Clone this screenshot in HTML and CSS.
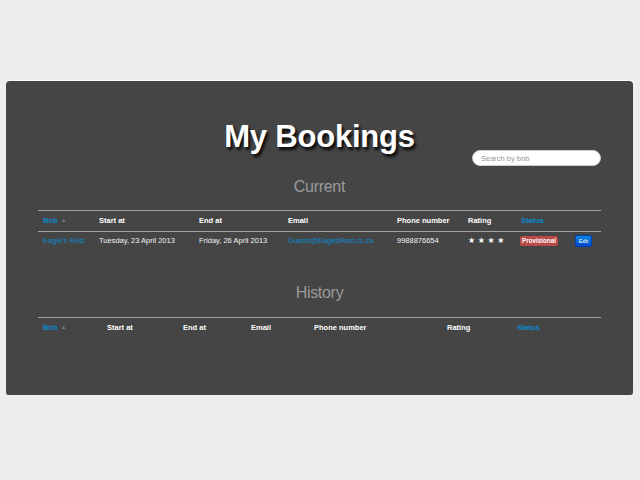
FILE: index.html
```html
<!DOCTYPE html>
<html lang="en">
<head>
<meta charset="utf-8">
<title>My Bookings</title>
<link rel="stylesheet" href="styles.css">
</head>
<body>
<div class="panel">
  <header class="head">
    <h1 class="title">My Bookings</h1>
    <input class="search" type="text" placeholder="Search by bnb">
  </header>

  <h2 class="section-title">Current</h2>
  <table class="grid">
    <colgroup>
      <col class="c1"><col class="c2"><col class="c3"><col class="c4"><col class="c5"><col class="c6"><col class="c7"><col class="c8">
    </colgroup>
    <thead>
      <tr>
        <th><a class="sort" href="#">Bnb</a><span class="arrow">▲</span></th>
        <th>Start at</th>
        <th>End at</th>
        <th>Email</th>
        <th>Phone number</th>
        <th>Rating</th>
        <th><a class="sort" href="#">Status</a></th>
        <th></th>
      </tr>
    </thead>
    <tbody>
      <tr>
        <td><a class="link" href="#">Eagle's Rest</a></td>
        <td>Tuesday, 23 April 2013</td>
        <td>Friday, 26 April 2013</td>
        <td><a class="link email" href="#">Guests@EaglesRest.co.za</a></td>
        <td>9988876654</td>
        <td><span class="stars">★ ★ ★ ★</span></td>
        <td><span class="badge">Provisional</span></td>
        <td><button class="btn-edit" type="button">Edit</button></td>
      </tr>
    </tbody>
  </table>

  <h2 class="section-title history">History</h2>
  <table class="grid">
    <colgroup>
      <col class="h1c"><col class="h2c"><col class="h3c"><col class="h4c"><col class="h5c"><col class="h6c"><col class="h7c">
    </colgroup>
    <thead>
      <tr>
        <th><a class="sort" href="#">Bnb</a><span class="arrow">▲</span></th>
        <th>Start at</th>
        <th>End at</th>
        <th>Email</th>
        <th>Phone number</th>
        <th>Rating</th>
        <th><a class="sort" href="#">Status</a></th>
      </tr>
    </thead>
  </table>
</div>
</body>
</html>
```
FILE: styles.css
```css
html, body {
  margin: 0;
  padding: 0;
  background: #eeeeee;
  font-family: "Liberation Sans", Arial, Helvetica, sans-serif;
}

.panel {
  box-sizing: border-box;
  margin: 81px 0 0 6px;
  width: 627px;
  height: 314px;
  padding: 40px 32px 0;
  background: #454545;
  border-radius: 4px;
  box-shadow: 0 1px 1px rgba(0, 0, 0, 0.55), 0 0 1px 1px rgba(255, 255, 255, 0.8);
}

.head {
  display: grid;
  grid-template-columns: 1fr auto 1fr;
  align-items: start;
}

.title {
  grid-column: 2;
  margin: 0;
  font-size: 31px;
  line-height: 31px;
  font-weight: bold;
  color: #ffffff;
  letter-spacing: -0.2px;
  text-shadow: 2px 3px 3px rgba(0, 0, 0, 0.9);
}

.search {
  grid-column: 3;
  justify-self: end;
  box-sizing: border-box;
  margin: 29px 0 0;
  width: 129px;
  height: 16px;
  padding: 0 8px;
  border: 1px solid #cccccc;
  border-radius: 8px;
  background: #ffffff;
  font-family: "Liberation Sans", Arial, sans-serif;
  font-size: 7.5px;
  color: #555555;
  outline: none;
}

.search::placeholder {
  color: #999999;
}

.section-title {
  margin: 11px 0 13px;
  text-align: center;
  font-size: 16px;
  line-height: 20px;
  font-weight: normal;
  color: #9a9a9a;
  letter-spacing: -0.3px;
}

.section-title.history {
  margin: 32px 0 14px;
}

.grid {
  width: 563px;
  table-layout: fixed;
  border-collapse: separate;
  border-spacing: 0;
  font-size: 7.5px;
  color: #f2f2f2;
}

.c1 { width: 56px; }
.c2 { width: 100px; }
.c3 { width: 89px; }
.c4 { width: 109px; }
.c5 { width: 71px; }
.c6 { width: 53px; }
.c7 { width: 54px; }
.c8 { width: 31px; }

.h1c { width: 64px; }
.h2c { width: 76px; }
.h3c { width: 68px; }
.h4c { width: 63px; }
.h5c { width: 133px; }
.h6c { width: 70px; }
.h7c { width: 89px; }

.grid th {
  border-top: 1px solid #a3a3a3;
  padding: 4px 5px 5px;
  line-height: 10px;
  text-align: left;
  font-weight: bold;
  color: #ffffff;
  white-space: nowrap;
}

.grid td {
  border-top: 1px solid #a3a3a3;
  padding: 3px 5px 4px;
  line-height: 12px;
  text-align: left;
  vertical-align: middle;
  white-space: nowrap;
}

.sort,
.link {
  color: #0a88cc;
  text-decoration: none;
}

.email {
  letter-spacing: -0.2px;
}

.arrow {
  margin-left: 3px;
  font-size: 6px;
  color: #777777;
  vertical-align: 1px;
}

.stars {
  font-family: "DejaVu Sans", sans-serif;
  font-size: 8px;
  color: #ffffff;
}

.badge {
  display: inline-block;
  margin-left: -1px;
  padding: 2px 2px;
  line-height: 6px;
  font-size: 6.3px;
  font-weight: bold;
  color: #ffffff;
  background: #b94a48;
  border-radius: 2px;
}

.btn-edit {
  display: inline-block;
  box-sizing: border-box;
  width: 17px;
  height: 12px;
  padding: 0;
  border: 1px solid #0040b0;
  border-radius: 2px;
  background: linear-gradient(#0a88dd, #0048cc);
  color: #ffffff;
  font-family: "Liberation Sans", Arial, sans-serif;
  font-size: 5.5px;
  line-height: 10px;
  vertical-align: middle;
}
```
